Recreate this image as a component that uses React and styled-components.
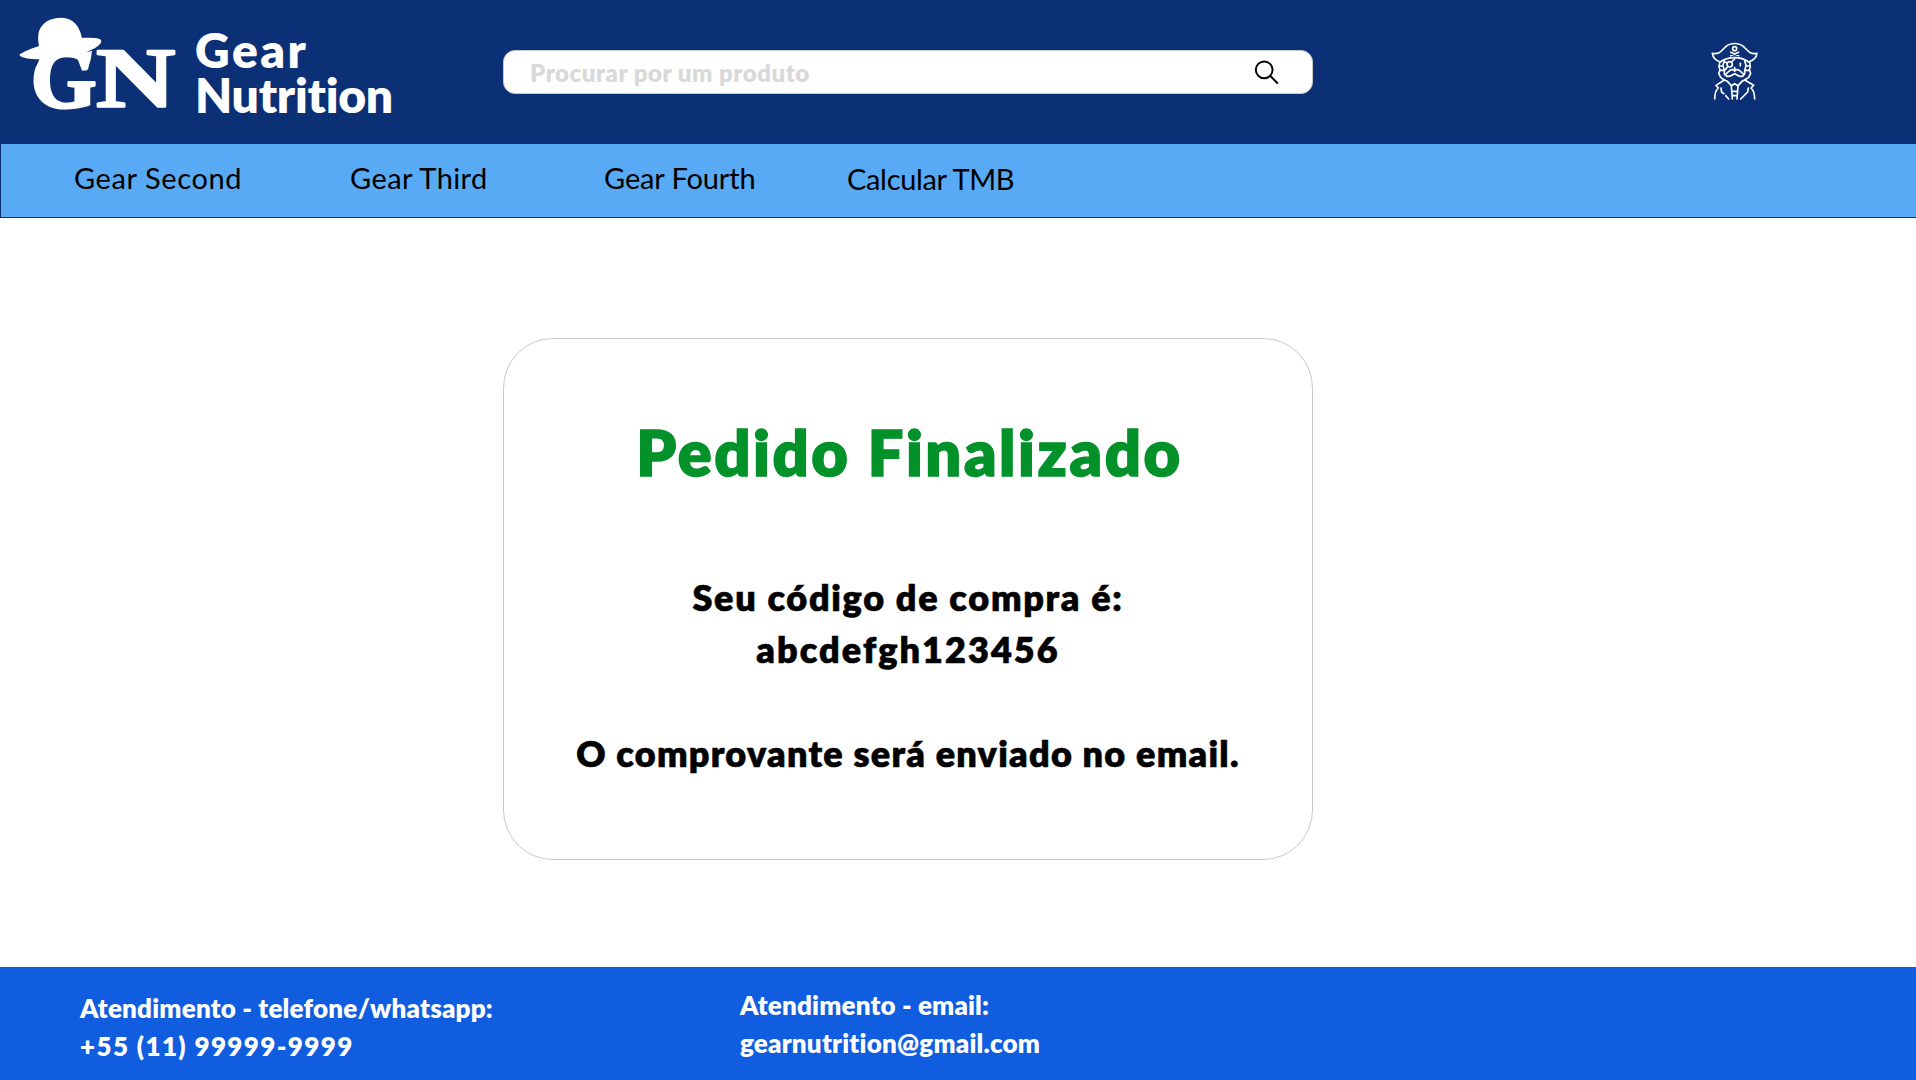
import React from "react";
import styled, { createGlobalStyle } from "styled-components";

const color = {
  navy: "#0b3075",
  sky: "#58aaf4",
  blue: "#115ddf",
  green: "#03912a",
  line: "#c9c9c9",
  hint: "#d9d9d9",
};

const GlobalStyle = createGlobalStyle`
  *, *::before, *::after { box-sizing: border-box; }
  body {
    margin: 0;
    background: #fff;
    color: #000;
    font-family: Lato, "Open Sans", sans-serif;
  }
`;

const Page = styled.div`
  display: grid;
  grid-template-rows: 143px 75px 1fr 113px;
  height: 1080px;
  overflow: hidden;
`;

const Header = styled.header`
  display: grid;
  grid-template-columns: 503px 810px 1fr;
  background: ${color.navy};
`;

const Brand = styled.a`
  display: flex;
  color: #fff;
  text-decoration: none;
`;

const LogoMark = styled.svg`
  display: block;
  flex: none;
  width: 180px;
  height: 130px;
`;

const BrandName = styled.div`
  display: flex;
  flex-direction: column;
  padding: 27px 0 0 15px;
`;

const Line = styled.span`
  display: block;
  white-space: nowrap;
  letter-spacing: ${(p) => p.$tracking || 0}px;
`;

const BrandLine = styled(Line)`
  font-size: 48px;
  line-height: 45px;
  font-weight: 800;
`;

const Search = styled.form`
  display: flex;
  align-items: center;
  justify-content: space-between;
  height: 44px;
  margin-top: 50px;
  padding: 0 32px 0 26px;
  background: #fff;
  border: 1px solid ${color.line};
  border-radius: 12px;
`;

const SearchInput = styled.input`
  flex: 1;
  min-width: 0;
  height: 41px;
  padding: 1px 0 0;
  border: 0;
  outline: 0;
  background: transparent;
  font: 800 24px/40px Lato, "Open Sans", sans-serif;
  letter-spacing: 0.52px;
  &::placeholder {
    color: ${color.hint};
    opacity: 1;
  }
`;

const SearchIcon = styled.svg`
  display: block;
  flex: none;
  width: 26px;
  height: 26px;
`;

const Account = styled.a`
  display: block;
  padding: 35px 0 0 387px;
`;

const PirateIcon = styled.svg`
  display: block;
  width: 70px;
  height: 75px;
`;

const Nav = styled.nav`
  display: grid;
  grid-template-columns: 276px 254px 243px auto;
  justify-content: start;
  padding: 19px 0 0 73px;
  background: ${color.sky};
  border: 1px solid ${color.navy};
  border-right: 0;
`;

const NavLink = styled.a`
  color: #000;
  font-size: 29px;
  line-height: 30px;
  white-space: nowrap;
  text-decoration: none;
  letter-spacing: ${(p) => p.$tracking}px;
  padding-top: ${(p) => (p.$low ? 1 : 0)}px;
`;

const Main = styled.main`
  padding: 120px 0 0 503px;
`;

const Card = styled.section`
  display: flex;
  flex-direction: column;
  align-items: center;
  width: 810px;
  height: 522px;
  padding-top: 78px;
  border: 1px solid ${color.line};
  border-radius: 50px;
`;

const Title = styled.h1`
  margin: 0 0 84px 3px;
  color: ${color.green};
  font-size: 63px;
  line-height: 70px;
  font-weight: 800;
  letter-spacing: 2.6px;
  -webkit-text-stroke: 1.4px ${color.green};
  white-space: nowrap;
`;

const Message = styled.p`
  margin: 0 0 52px;
  text-align: center;
  font-size: 36px;
  line-height: 52px;
  font-weight: 800;
  -webkit-text-stroke: 0.6px #000;
`;

const Footer = styled.footer`
  display: grid;
  grid-template-columns: 660px auto;
  justify-content: start;
  padding-left: 80px;
  color: #fff;
  background: ${color.blue};
`;

const Contact = styled.div`
  padding-top: ${(p) => p.$top}px;
  font-size: 26px;
  line-height: 38px;
  font-weight: 800;
`;

function Logo() {
  return (
    <LogoMark viewBox="0 0 540 390" fill="#fff">
      <path d="M58 164C70 155 94 146 117 138C114 124 113 108 117 94C126 68 150 53 184 53C222 54 240 82 246 114C264 113 303 112 304 123C304 135 282 149 258 156L276 153L272 180L262 211L246 212L234 180L228 170C205 167 180 168 160 174L140 196L104 215L118 178C92 178 60 173 58 164Z" />
      <g fontFamily="Liberation Serif, serif" fontWeight="700" stroke="#fff" strokeLinejoin="round">
        <text transform="translate(92 323)" fontSize="254" strokeWidth="8">G</text>
        <text transform="translate(289 322) scale(1.28 1)" fontSize="256" strokeWidth="8">N</text>
      </g>
    </LogoMark>
  );
}

function Pirate() {
  return (
    <PirateIcon
      viewBox="30 15 210 225"
      fill="none"
      stroke="#fff"
      strokeWidth="5"
      strokeLinecap="round"
      strokeLinejoin="round"
    >
      <path d="M67 70C90 74 94 62 106 51C122 37 146 37 162 51C174 62 178 74 201 70C199 84 188 92 176 96C162 86 148 83 134 83C120 83 104 86 91 96C78 92 69 84 67 70Z" />
      <circle cx="134" cy="56" r="6" />
      <path d="M122 67L146 77M146 67L122 77" />
      <path d="M89 97L87 110L90 120L86 130L92 142L103 150M179 97L181 110L178 120L182 130L176 142L164 150" />
      <path d="M103 92L99 106L103 122V132L110 138M164 92L168 106L164 122V132L158 138M90 108H98M90 121H101M178 108H169M178 121H166" />
      <circle cx="119" cy="103" r="8" />
      <path d="M105 96L112 99M124 96L134 87M113 110L106 119" />
      <path d="M151 100V107" />
      <path d="M106 133C113 130 116 121 125 119C129 118 132 120 134 123C136 120 139 118 143 119C152 121 155 130 162 133M110 139C118 140 124 137 127 135L134 131L141 135C144 137 150 140 158 139M134 113V119" />
      <path d="M103 150L112 154L124 167L134 161L144 167L156 154L164 150" />
      <path d="M103 150L78 166L85 174C76 182 74 192 74 207M164 150L191 166L183 174C192 182 194 192 194 207" />
      <path d="M93 174L95 187L102 191M107 197L116 207M175 174L173 186L152 207" />
      <path d="M124 168L127 207M144 168L141 207M126 184H142M127 197H141" />
    </PirateIcon>
  );
}

const links = [
  { label: "Gear Second", tracking: 0.6 },
  { label: "Gear Third", tracking: 0.42 },
  { label: "Gear Fourth", tracking: -0.13 },
  { label: "Calcular TMB", tracking: -0.33, low: true },
];

export default function App() {
  return (
    <>
      <GlobalStyle />
      <Page>
        <Header>
          <Brand>
            <Logo />
            <BrandName>
              <BrandLine $tracking={2.5}>Gear</BrandLine>
              <BrandLine $tracking={-0.25}>Nutrition</BrandLine>
            </BrandName>
          </Brand>
          <Search>
            <SearchInput placeholder="Procurar por um produto" />
            <SearchIcon viewBox="0 0 26 26" fill="none" stroke="#000" strokeWidth="2" strokeLinecap="round">
              <circle cx="10.2" cy="10.8" r="8.4" />
              <path d="M16.3 17L23.3 24" />
            </SearchIcon>
          </Search>
          <Account>
            <Pirate />
          </Account>
        </Header>
        <Nav>
          {links.map((l) => (
            <NavLink key={l.label} $tracking={l.tracking} $low={l.low}>
              {l.label}
            </NavLink>
          ))}
        </Nav>
        <Main>
          <Card>
            <Title>Pedido Finalizado</Title>
            <Message>
              <Line $tracking={1.7}>Seu código de compra é:</Line>
              <Line $tracking={2.07}>abcdefgh123456</Line>
            </Message>
            <Message>
              <Line $tracking={1.24}>O comprovante será enviado no email.</Line>
            </Message>
          </Card>
        </Main>
        <Footer>
          <Contact $top={22}>
            <Line $tracking={0.19}>Atendimento - telefone/whatsapp:</Line>
            <Line $tracking={1.38}>+55 (11) 99999-9999</Line>
          </Contact>
          <Contact $top={19}>
            <Line $tracking={0.16}>Atendimento - email:</Line>
            <Line $tracking={0.2}>gearnutrition@gmail.com</Line>
          </Contact>
        </Footer>
      </Page>
    </>
  );
}
